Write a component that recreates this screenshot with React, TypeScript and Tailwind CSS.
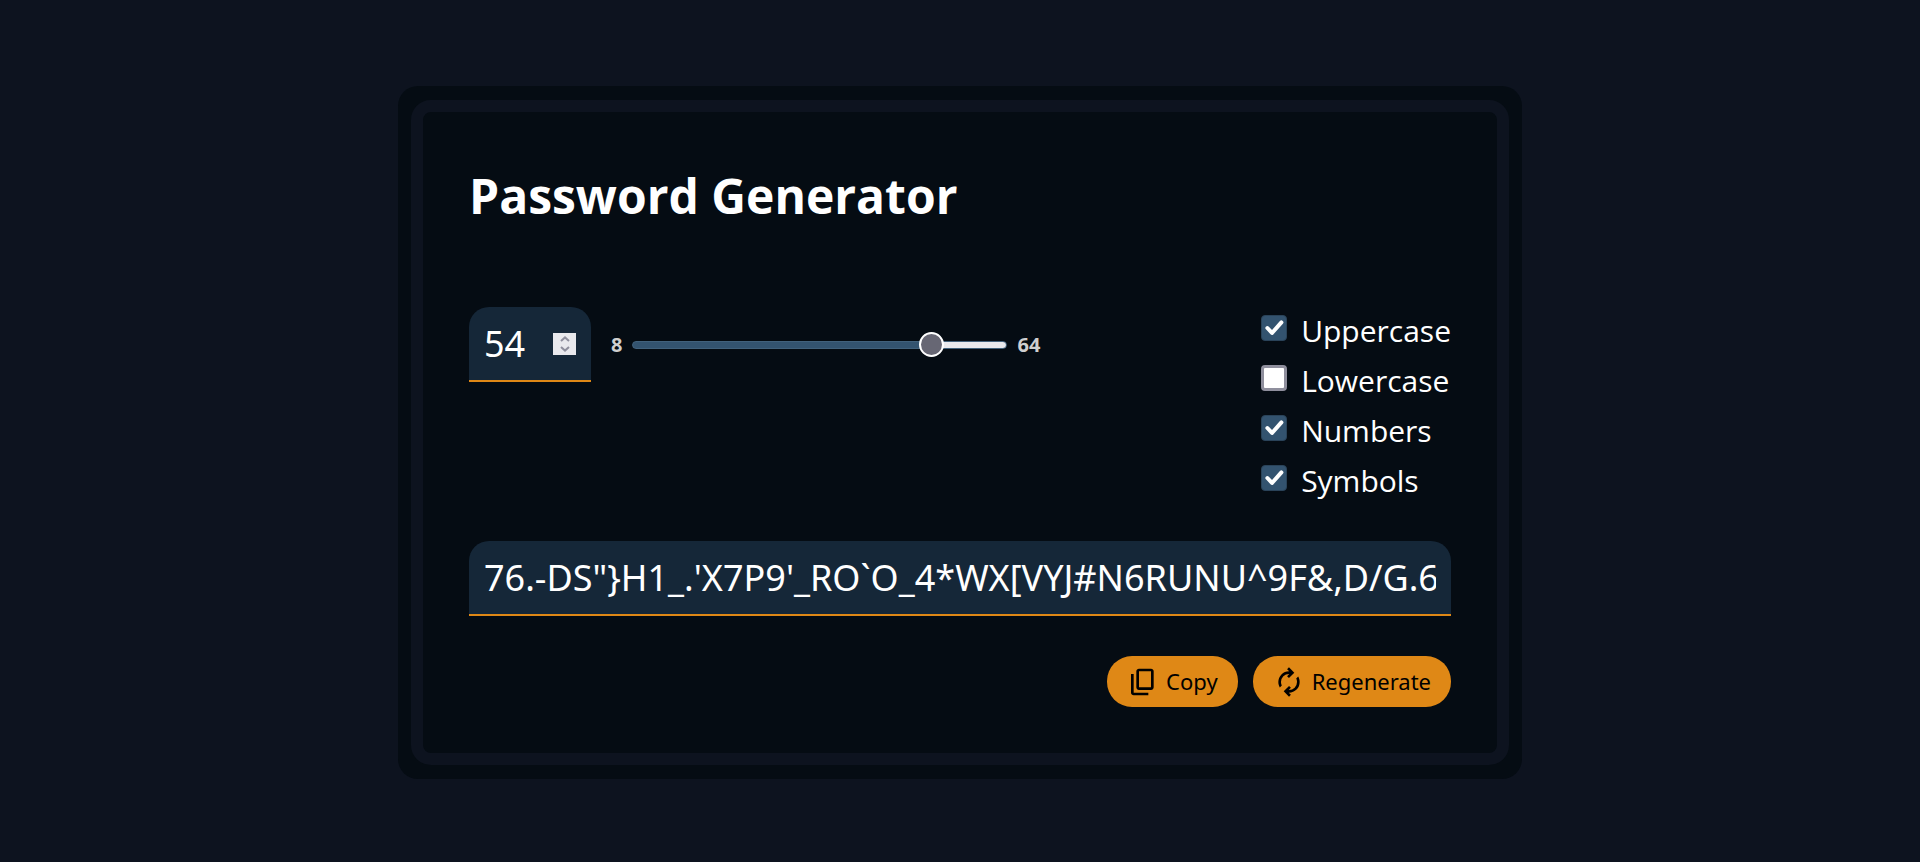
import React, { useState } from "react";

const MIN = 8;
const MAX = 64;

const initialPassword =
  "76.-DS\"}H1_.'X7P9'_RO`O_4*WX[VYJ#N6RUNU^9F&,D/G.6K!2$Q";

const charSets: Record<string, string> = {
  Uppercase: "ABCDEFGHIJKLMNOPQRSTUVWXYZ",
  Lowercase: "abcdefghijklmnopqrstuvwxyz",
  Numbers: "0123456789",
  Symbols: "!\"#$%&'()*+,-./:;<=>?@[]^_`{|}~",
};

interface OptionProps {
  label: string;
  checked: boolean;
  onChange: () => void;
}

const Option: React.FC<OptionProps> = ({ label, checked, onChange }) => (
  <label className="flex h-[50px] cursor-pointer items-start gap-[14px]">
    <span className="mt-2 grid">
      <input
        type="checkbox"
        checked={checked}
        onChange={onChange}
        className="peer col-start-1 row-start-1 size-[26px] appearance-none rounded-[4px] border-[3px] border-[#8f8f9d] bg-white checked:border checked:border-[#2a4359] checked:bg-[#33536f]"
      />
      <svg
        viewBox="0 0 26 26"
        className="pointer-events-none invisible col-start-1 row-start-1 size-[26px] peer-checked:visible"
        fill="none"
        stroke="#fff"
        strokeWidth="4"
      >
        <path d="M6.4 13 L11 18 L20.4 7.4" strokeLinejoin="round" strokeLinecap="round" />
      </svg>
    </span>
    <span className="text-[30px] leading-[48px]">{label}</span>
  </label>
);

const CopyIcon = () => (
  <svg viewBox="0 -960 960 960" className="size-8" fill="currentColor">
    <path d="M360-240q-33 0-56.5-23.5T280-320v-480q0-33 23.5-56.5T360-880h360q33 0 56.5 23.5T800-800v480q0 33-23.5 56.5T720-240H360Zm0-80h360v-480H360v480ZM200-80q-33 0-56.5-23.5T120-160v-560h80v560h440v80H200Zm160-240v-480 480Z" />
  </svg>
);

const RegenerateIcon = () => (
  <svg viewBox="0 -960 960 960" className="size-8" fill="currentColor">
    <path d="M204-318q-22-38-33-78t-11-82q0-134 93-228t227-94h7l-64-64 56-56 160 160-160 160-56-56 64-64h-7q-100 0-170 70.5T240-478q0 26 6 51t18 49l-60 60ZM481-40 321-200l160-160 56 56-64 64h7q100 0 170-70.5T720-482q0-26-6-51t-18-49l60-60q22 38 33 78t11 82q0 134-93 228t-227 94h-7l64 64-56 56Z" />
  </svg>
);

const App: React.FC = () => {
  const [length, setLength] = useState(54);
  const [password, setPassword] = useState(initialPassword);
  const [options, setOptions] = useState<Record<string, boolean>>({
    Uppercase: true,
    Lowercase: false,
    Numbers: true,
    Symbols: true,
  });

  const generate = (len: number, opts: Record<string, boolean>) => {
    const pool = Object.keys(opts)
      .filter((key) => opts[key])
      .map((key) => charSets[key])
      .join("");
    let result = "";
    for (let i = 0; i < len && pool; i++) {
      result += pool[Math.floor(Math.random() * pool.length)];
    }
    setPassword(result);
  };

  const changeLength = (value: number) => {
    const next = Math.min(MAX, Math.max(MIN, value));
    setLength(next);
    generate(next, options);
  };

  const toggle = (key: string) => {
    const next = { ...options, [key]: !options[key] };
    setOptions(next);
    generate(length, next);
  };

  const percent = ((length - MIN) / (MAX - MIN)) * 100;

  return (
    <main className="flex min-h-screen items-start justify-center bg-[#0d131f] pt-[86px] pb-20 font-['Noto_Sans','Open_Sans',sans-serif] text-white">
      <div className="w-full max-w-[1124px] rounded-[20px] bg-[#050c13] px-[13px] py-[14px]">
        <section className="rounded-[20px] border-12 border-[#0d131f] p-[46px]">
          <h1 className="font-['Open_Sans','Noto_Sans',sans-serif] text-5xl leading-[76px] font-bold">
            Password Generator
          </h1>

          <div className="mt-[73px] flex flex-wrap items-start justify-between">
            <div className="flex items-center">
              <div className="flex h-[75px] w-[122px] items-center justify-between rounded-t-[20px] border-b-2 border-[#df8816] bg-[#152738] px-[15px]">
                <input
                  type="number"
                  aria-label="Password length"
                  min={MIN}
                  max={MAX}
                  value={length}
                  onChange={(e) => changeLength(Number(e.target.value))}
                  className="w-14 bg-transparent text-4xl outline-none [appearance:textfield] [&::-webkit-inner-spin-button]:appearance-none"
                />
                <div className="flex h-[22px] w-[23px] flex-col items-center justify-center gap-1 bg-[#e9e9ed] text-[#8f8f9d]">
                  <button type="button" aria-label="Increase length" onClick={() => changeLength(length + 1)}>
                    <svg viewBox="0 0 10 6" className="h-1.5 w-2.5" fill="none" stroke="currentColor" strokeWidth="2">
                      <path d="M1 5 L5 1.4 L9 5" />
                    </svg>
                  </button>
                  <button type="button" aria-label="Decrease length" onClick={() => changeLength(length - 1)}>
                    <svg viewBox="0 0 10 6" className="h-1.5 w-2.5" fill="none" stroke="currentColor" strokeWidth="2">
                      <path d="M1 1 L5 4.6 L9 1" />
                    </svg>
                  </button>
                </div>
              </div>
              <span className="ml-5 text-xl font-bold text-[#cfcfcf]">{MIN}</span>
              <input
                type="range"
                aria-label="Length"
                min={MIN}
                max={MAX}
                value={length}
                onChange={(e) => changeLength(Number(e.target.value))}
                style={{
                  backgroundImage: `linear-gradient(to right, #33536f ${percent}%, #e9e9ed ${percent}%)`,
                }}
                className="mx-2.5 h-2 w-[375px] appearance-none rounded-full border border-[#41617c] [&::-webkit-slider-thumb]:size-[25px] [&::-webkit-slider-thumb]:appearance-none [&::-webkit-slider-thumb]:rounded-full [&::-webkit-slider-thumb]:border-2 [&::-webkit-slider-thumb]:border-white [&::-webkit-slider-thumb]:bg-[#676774]"
              />
              <span className="text-xl font-bold text-[#cfcfcf]">{MAX}</span>
            </div>

            <div className="flex flex-col font-['Open_Sans','Noto_Sans',sans-serif]">
              {Object.keys(options).map((key) => (
                <Option key={key} label={key} checked={options[key]} onChange={() => toggle(key)} />
              ))}
            </div>
          </div>

          <input
            type="text"
            aria-label="Generated password"
            readOnly
            value={password}
            className="mt-[34px] block h-[75px] w-full rounded-t-[20px] border-b-2 border-[#df8816] bg-[#152738] px-[15px] text-4xl outline-none"
          />

          <div className="mt-10 flex justify-end gap-[15px] text-[22px] text-black">
            <button
              type="button"
              onClick={() => navigator.clipboard.writeText(password)}
              className="flex h-[51px] items-center gap-[7px] rounded-[25px] bg-[#df8816] px-5"
            >
              <CopyIcon />
              Copy
            </button>
            <button
              type="button"
              onClick={() => generate(length, options)}
              className="flex h-[51px] items-center gap-[7px] rounded-[25px] bg-[#df8816] px-5"
            >
              <RegenerateIcon />
              Regenerate
            </button>
          </div>
        </section>
      </div>
    </main>
  );
};

export default App;
